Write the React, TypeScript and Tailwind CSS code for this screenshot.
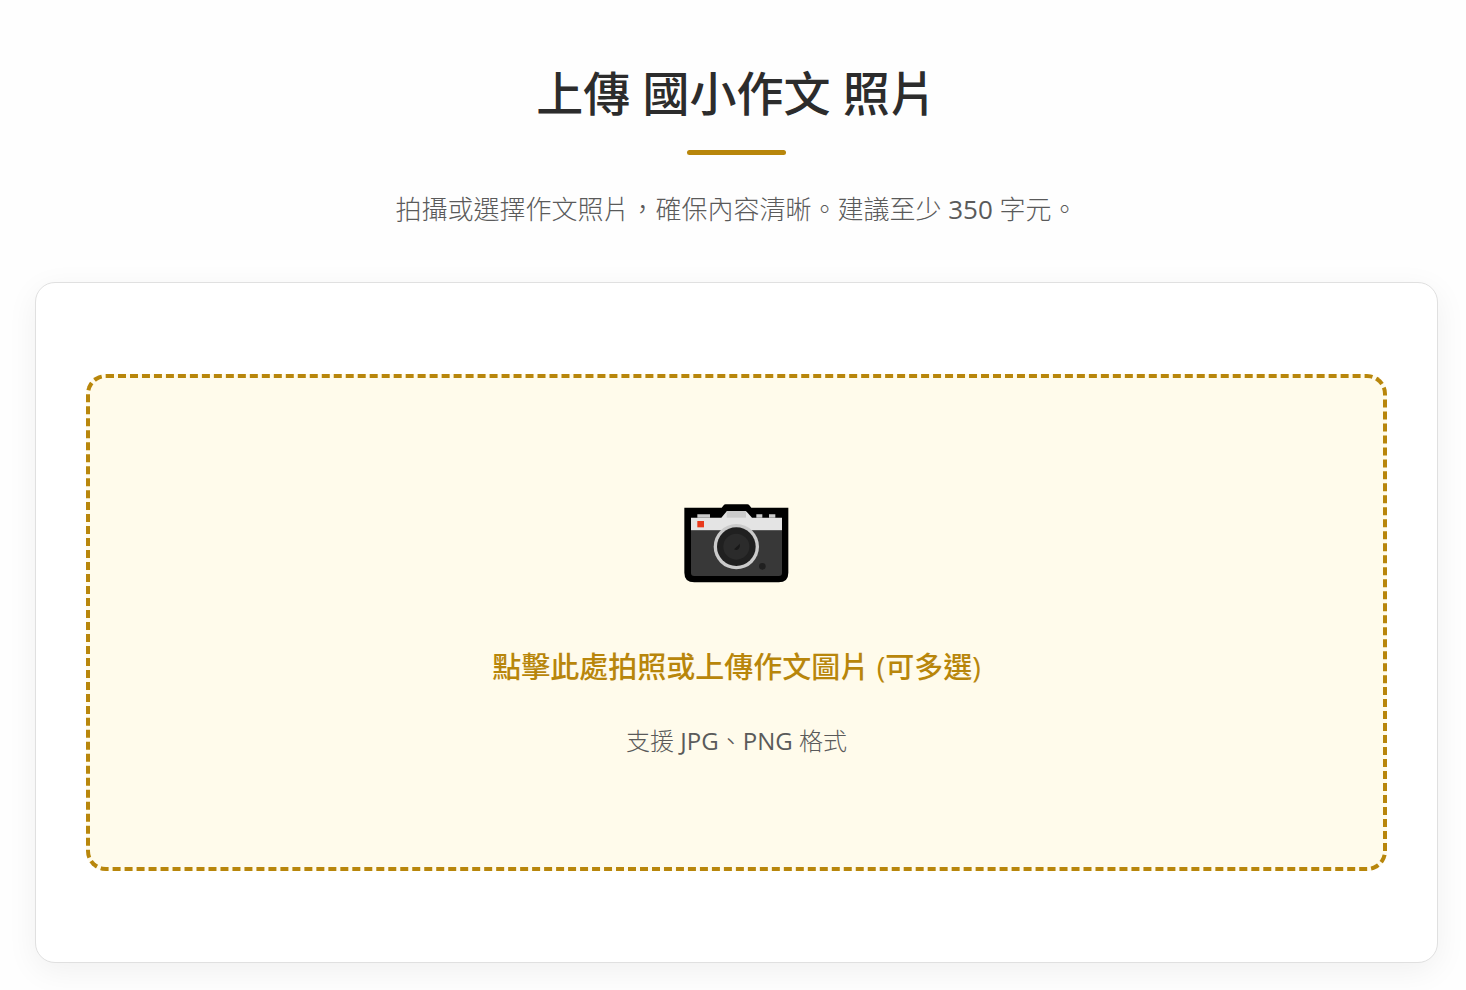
import { useRef } from 'react';

function CameraIcon() {
  return (
    <svg viewBox="42 42 315 237" width={105} height={79} aria-hidden="true">
      <path
        d="M43 53H155L161 46Q163 43 167 43H232Q236 43 238 46L244 53H355V248Q355 277 326 277H73Q43 277 43 248Z"
        fill="#000"
      />
      <path d="M63 121H336V249Q336 258 327 258H72Q63 258 63 249Z" fill="#383838" />
      <path d="M63 83H154L169 65Q171 63 174 63H225Q228 63 230 65L246 83H336V121H63Z" fill="#e4e4e4" />
      <path d="M170 63H228V83H170Z" fill="#cbcbcb" />
      <path d="M82 73H120V83H82ZM259 73H277V83H259ZM297 73H316V83H297Z" fill="#cbcbcb" />
      <rect x="82" y="93" width="20" height="19" fill="#e8391c" />
      <circle cx="199" cy="170" r="68" fill="#cbcbcb" />
      <circle cx="199" cy="170" r="58" fill="#202020" />
      <circle cx="199" cy="170" r="39" fill="#2b2b2b" />
      <path d="M210 161Q211 172 205 178Q199 182 192 178Z" fill="#181818" />
      <circle cx="277" cy="229" r="10" fill="#202020" />
    </svg>
  );
}

export default function App() {
  const fileInput = useRef<HTMLInputElement>(null);

  return (
    <main className="min-h-screen bg-[#fefefe] pt-[59px] pr-7 pb-7 pl-[35px] font-['Open_Sans','Noto_Sans_CJK_TC',sans-serif] text-[#2c2c2c]">
      <header className="flex flex-col items-center text-center">
        <h1 className="text-[47px] leading-[68px] font-medium">上傳 國小作文 照片</h1>
        <div className="mt-[23px] h-[5px] w-[99px] rounded-full bg-[#b8860b]" />
        <p className="mt-[34px] text-[26px] leading-10 font-light text-[#5a5a5a]">
          拍攝或選擇作文照片，確保內容清晰。建議至少 <span className="font-normal">350</span> 字元。
        </p>
      </header>

      <section className="mt-[53px] rounded-[20px] border border-[#e0e0e0] bg-white px-[50px] py-[91px] shadow-[0_8px_32px_rgba(0,0,0,0.06)]">
        <button
          type="button"
          onClick={() => fileInput.current?.click()}
          className="flex w-full cursor-pointer flex-col items-center rounded-[20px] border-4 border-dashed border-[#b8860b] bg-[#fffbeb] px-6 pt-[126px] pb-[108px]"
        >
          <CameraIcon />
          <span className="mt-[62px] text-[29px] leading-11 font-medium text-[#b8860b]">
            點擊此處拍照或上傳作文圖片 (可多選)
          </span>
          <span className="mt-[34px] text-[24px] leading-9 font-light text-[#5a5a5a]">
            支援 <span className="font-normal">JPG</span>、<span className="font-normal">PNG</span> 格式
          </span>
        </button>
        <input
          ref={fileInput}
          type="file"
          accept="image/jpeg,image/png"
          multiple
          aria-label="上傳作文圖片"
          className="hidden"
        />
      </section>
    </main>
  );
}
